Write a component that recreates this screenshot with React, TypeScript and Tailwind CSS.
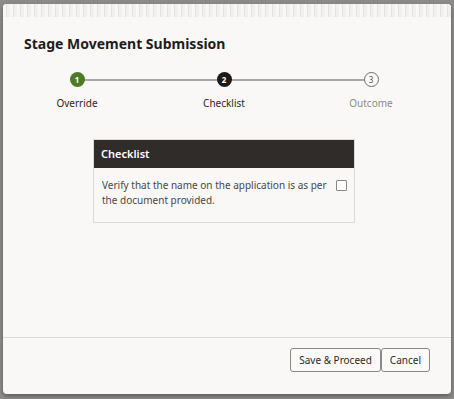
import React from "react";

const steps = [
  { n: 1, label: "Override", state: "done" },
  { n: 2, label: "Checklist", state: "current" },
  { n: 3, label: "Outcome", state: "todo" },
];

const StepDot: React.FC<{ n: number; state: string }> = ({ n, state }) => {
  if (state === "done")
    return (
      <div className="w-[15px] h-[15px] rounded-full bg-[#4b7b26] text-white text-[8px] font-bold flex items-center justify-center">
        {n}
      </div>
    );
  if (state === "current")
    return (
      <div className="w-[15px] h-[15px] rounded-full bg-[#1c1a19] text-white text-[8px] font-bold flex items-center justify-center">
        {n}
      </div>
    );
  return (
    <div className="w-[15px] h-[15px] rounded-full border border-[#6f6c6a] bg-[#fbfaf8] text-[#55524f] text-[8px] flex items-center justify-center">
      {n}
    </div>
  );
};

export default function App() {
  return (
    <div className="w-[454px] h-[399px] bg-[#8c8b8a] pt-[4px] px-[3px] font-['Noto_Sans',sans-serif]">
      <div className="h-[390px] bg-[#f9f8f6] rounded-[4px] shadow-[0_2px_4px_rgba(0,0,0,0.35)] flex flex-col overflow-hidden">
        {/* noisy strip at top */}
        <div className="h-[13px] bg-[#efeeed] bg-[repeating-linear-gradient(90deg,#f7f7f6_0px,#f7f7f6_3px,#e4e3e2_3px,#e4e3e2_4px,#f1f0ef_4px,#f1f0ef_7px)]" />

        <div className="flex-1 flex flex-col">
          <h1 className="pl-[21px] pt-[17px] text-[14px] font-bold text-[#1f1d1c] leading-[20px]">
            Stage Movement Submission
          </h1>

          {/* stepper */}
          <div className="mt-[18px] relative h-[42px]">
            <div className="absolute left-[81px] w-[134px] top-[7px] h-[2px] bg-[#a9a8a6]" />
            <div className="absolute left-[228px] w-[134px] top-[7px] h-[2px] bg-[#a9a8a6]" />
            <div className="flex">
              {steps.map((s, i) => (
                <div
                  key={s.n}
                  className={`flex flex-col items-center w-[80px] ${i === 0 ? "ml-[34px]" : "ml-[67px]"}`}
                >
                  <div className="relative z-10">
                    <StepDot n={s.n} state={s.state} />
                  </div>
                  <span
                    className={`mt-[9px] text-[10px] leading-[14px] ${
                      s.state === "todo" ? "text-[#8e8b88]" : "text-[#2b2826]"
                    }`}
                  >
                    {s.label}
                  </span>
                </div>
              ))}
            </div>
          </div>

          {/* checklist card */}
          <div className="mt-[25px] ml-[90px] w-[262px] border border-[#dddbd8]">
            <div className="h-[28px] bg-[#302c29] text-white text-[11px] font-semibold flex items-center pl-[7px]">
              Checklist
            </div>
            <div className="flex items-start justify-between pl-[8px] pr-[7px] pt-[10px] pb-[14px]">
              <p className="text-[10px] leading-[15px] text-[#4a4744] w-[232px]">
                Verify that the name on the application is as per the document provided.
              </p>
              <div className="mt-[2px] w-[11px] h-[11px] border border-[#8a8784] rounded-[1px] bg-white" />
            </div>
          </div>
        </div>

        {/* footer */}
        <div className="h-[57px] border-t border-[#dcdad7] flex justify-end items-start pt-[10px] pr-[21px]">
          <button className="h-[24px] px-[8px] border border-[#8a8784] rounded-[3px] text-[10px] text-[#2b2826] bg-[#fbfaf9]">
            Save &amp; Proceed
          </button>
          <button className="h-[24px] px-[8px] border border-[#8a8784] rounded-[3px] text-[10px] text-[#2b2826] bg-[#fbfaf9]">
            Cancel
          </button>
        </div>
      </div>
    </div>
  );
}
